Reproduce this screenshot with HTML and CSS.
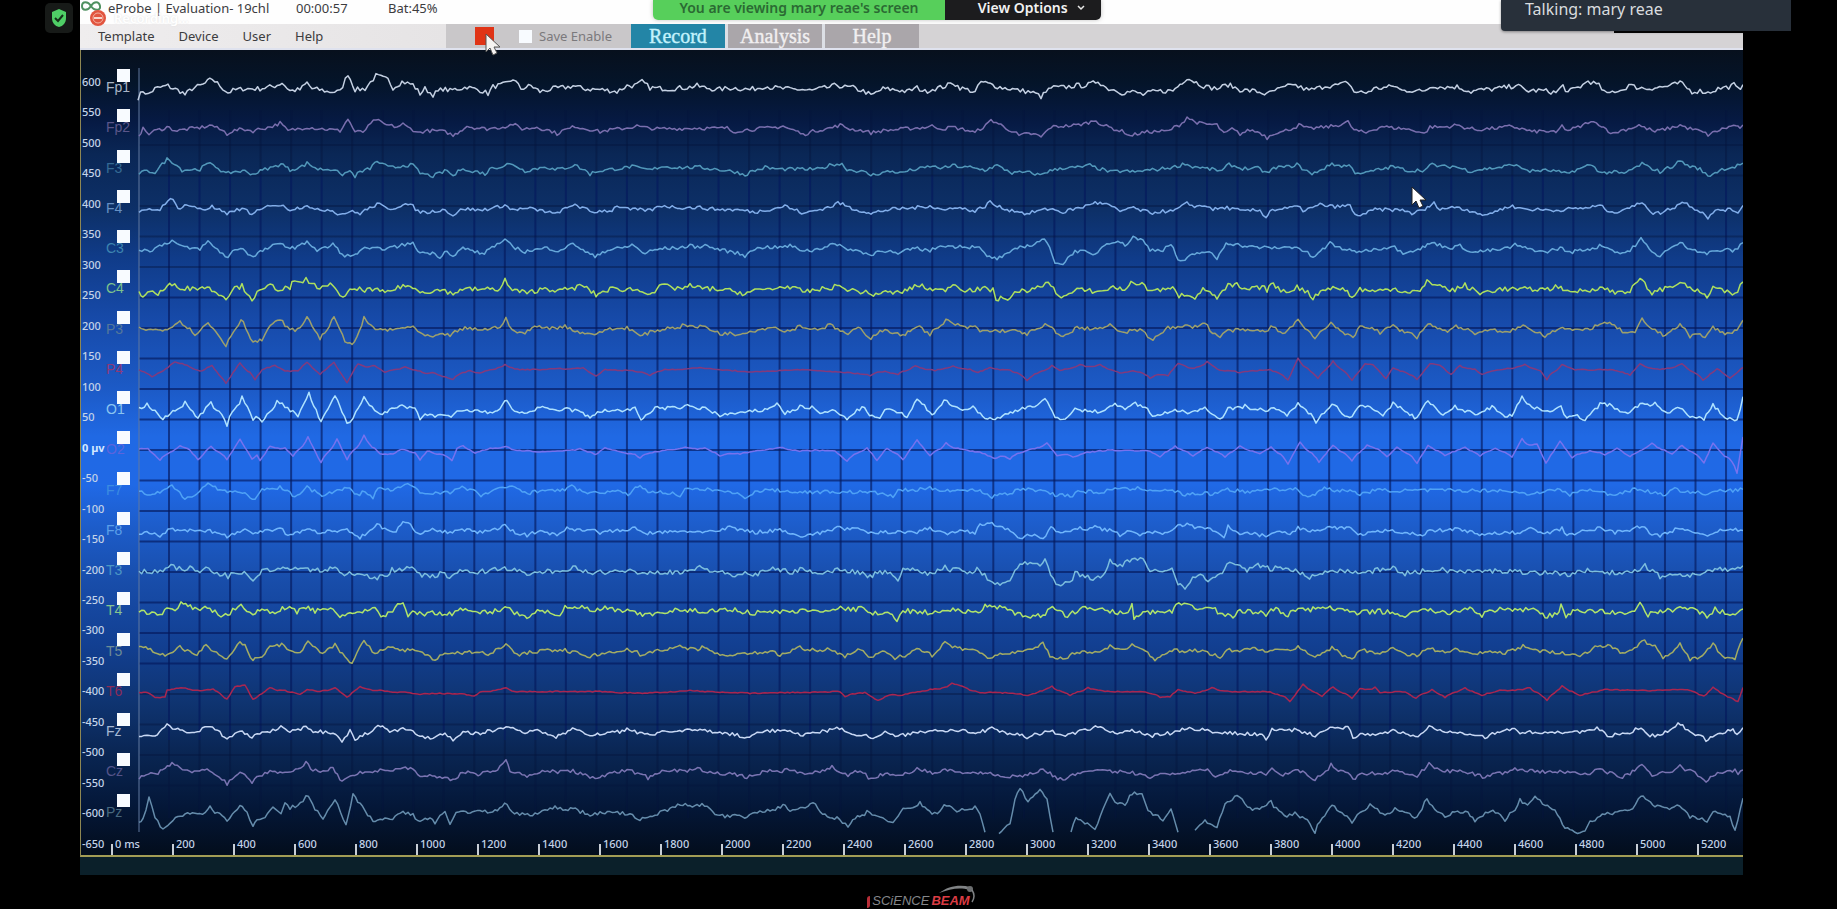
FILE: index.html
```html
<!DOCTYPE html>
<html lang="en">
<head>
<meta charset="utf-8">
<title>eProbe | Evaluation- 19chl</title>
<link rel="stylesheet" href="styles.css">
</head>
<body>
<main class="app">
  <header class="titlebar">
    <svg class="app-icon" viewBox="0 0 20 12" aria-hidden="true"><path d="M10 5C7 0 1 0 1 5s6 5 9 0 8-5 9 0-6 5-9 0z" fill="none" stroke="#4f9160" stroke-width="2"/></svg>
    <span class="app-title">eProbe | Evaluation- 19chl</span>
    <span class="clock">00:00:57</span>
    <span class="battery">Bat:45%</span>
  </header>
  <div class="menubar">
    <nav class="menu">
      <button type="button">Template</button>
      <button type="button">Device</button>
      <button type="button">User</button>
      <button type="button">Help</button>
    </nav>
    <div class="tools">
      <button type="button" class="stop" aria-label="Stop recording"></button>
      <label class="save"><input type="checkbox" class="box">Save Enable</label>
    </div>
    <div class="tabs">
      <button type="button" class="tab active">Record</button>
      <button type="button" class="tab">Analysis</button>
      <button type="button" class="tab">Help</button>
    </div>
  </div>
  <section class="plot" id="plot">
    <svg class="chart" id="chart" aria-label="EEG traces"></svg>
    <div class="channels" id="channels"></div>
  </section>
  <div class="status"></div>
</main>
<footer class="footer">
  <div class="logo">
    <span class="logo-bar"></span><span class="logo-a">SCiENCE</span><span class="logo-b">BEAM</span>
    <svg class="swoosh" viewBox="0 0 38 20" aria-hidden="true"><path d="M1 8C10 1 22-1 32 2l-1 3C22 2 12 4 1 8z" fill="#808385"/><circle cx="32" cy="4" r="3" fill="#6c6e70"/><path d="M34 5q4 6 0 12" fill="none" stroke="#808385" stroke-width="1.5"/></svg>
  </div>
</footer>

<div class="shield"><svg viewBox="0 0 18 20" aria-hidden="true"><path d="M9 1l7 3v6c0 5-3 8-7 9-4-1-7-4-7-9V4z" fill="#4fce66"/><path d="M5 10l3 3 5-6" fill="none" stroke="#15301a" stroke-width="2"/></svg></div>
<div class="recording"><svg viewBox="0 0 18 18" aria-hidden="true"><circle cx="9" cy="9" r="8" fill="#e2553f"/><circle cx="9" cy="9" r="5" fill="none" stroke="#f3b3a4" stroke-width="1"/><path d="M5 9h8" stroke="#f8d5cb" stroke-width="2"/></svg><span>Recording...</span></div>
<div class="sharebar">
  <span class="viewing">You are viewing mary reae's screen</span>
  <button type="button" class="options">View Options <svg viewBox="0 0 10 6" aria-hidden="true"><path d="M2 1l3 3 3-3" fill="none" stroke="#e8e8e8" stroke-width="1.5"/></svg></button>
</div>
<div class="speaker-shade"></div>
<div class="speaker">Talking: mary reae</div>
<svg class="cursor cursor-stop" viewBox="0 0 16 24" aria-hidden="true"><path d="M1 1v18l4-4 3 7 4-2-3-6h6z" fill="#f6f4f2" stroke="#555"/></svg>
<svg class="cursor cursor-plot" viewBox="0 0 16 24" aria-hidden="true"><path d="M1 1v18l4-4 3 7 4-2-3-6h6z" fill="#fff" stroke="#222"/></svg>
<script src="chart.js"></script>
</body>
</html>
```
FILE: styles.css
```css
* { box-sizing: border-box; }
body {
  margin: 0;
  min-height: 100vh;
  display: flex;
  flex-direction: column;
  background: #000;
  color: #3c3c3e;
  font: 13px/20px "Noto Sans", "Open Sans", sans-serif;
  overflow: hidden;
}
button { border: 0; padding: 0; font: inherit; color: inherit; background: none; white-space: nowrap; }
.app { flex: 1; display: flex; flex-direction: column; margin: 0 94px 0 80px; }
.titlebar { height: 24px; display: flex; align-items: flex-start; background: #fefefe; line-height: 16px; white-space: nowrap; }
.app-icon { width: 20px; height: 12px; margin: 1px 7px 0 1px; }
.app-title { width: 188px; }
.clock { width: 92px; }
.menubar { height: 26px; display: flex; align-items: stretch; background: linear-gradient(90deg, #efedee, #e6e4e5 366px, #d5d3d5 366px); border-bottom: 2px solid #dfe2ee; }
.menu { width: 366px; padding-left: 18px; display: flex; align-items: center; gap: 24px; }
.tools { width: 185px; padding-left: 29px; display: flex; align-items: center; gap: 25px; background: #c9c7c9; color: #7b797c; }
.stop { width: 19px; height: 18px; background: #e03416; }
.save { display: flex; align-items: center; gap: 7px; white-space: nowrap; }
.box { appearance: none; width: 13px; height: 13px; margin: 0; background: #f8fbff; flex: none; }
.tabs { display: flex; gap: 3px; background: #dcdfe5; }
.tab { width: 94px; background: #aaa6aa; color: #f1eff0; font: 20px/22px "Liberation Serif", serif; -webkit-text-stroke: 0.4px; }
.tab.active { background: #2385a6; color: #c4f2fc; }
.plot {
  flex: 1;
  min-height: 500px;
  position: relative;
  border-left: 1px solid #8e8752;
  border-bottom: 2px solid #a39d55;
  background: linear-gradient(#07101d 0%, #041429 4%, #061a44 9%, #0a2756 13%, #0d3068 20%, #103c8a 26%, #174bab 34%, #1c5ac6 42%, #2069e4 48%, #2069e6 54%, #1d5dcb 59%, #184daa 66%, #123f91 74%, #0f3471 81%, #092450 88%, #041738 94%, #030d1c 100%);
}
.chart { display: block; position: absolute; inset: 0; width: 100%; height: 100%; overflow: hidden; }
.chart text { font: 500 11px "Noto Sans", sans-serif; fill: #c3d3e8; }
.chart .zero { font-weight: 700; fill: #d4e8ff; }
.grid { stroke: #04185c; stroke-width: 2; stroke-opacity: .65; }
.grid-faint { stroke: #04143c; stroke-opacity: .4; }
.axis { stroke: #61789f; stroke-width: 1; }
.tick { stroke: #c8ced6; stroke-width: 2; }
.trace { fill: none; stroke-width: 1.5; stroke-linejoin: round; }
.channels { position: absolute; top: 5px; bottom: 35px; left: 25px; width: 22px; display: grid; grid-template-rows: repeat(19, 1fr); }
.channel { display: flex; flex-direction: column; justify-content: center; height: 26px; margin-top: 13px; font: 14px/11px "Liberation Sans", sans-serif; }
.channel .box { align-self: flex-end; }
.channel span { position: relative; }
.status { height: 18px; background: #0b202a; }
.footer { height: 34px; display: flex; justify-content: center; padding-top: 18px; }
.logo { position: relative; display: flex; gap: 2px; font: italic 700 13px/16px "Liberation Sans", sans-serif; height: 16px; }
.logo-bar { width: 3px; height: 12px; margin-top: 3px; background: #b82e38; border-radius: 3px 0; }
.logo-a { color: #85878a; font-weight: 400; }
.logo-b { color: #dc3c44; }
.swoosh { position: absolute; right: -6px; top: -8px; width: 38px; height: 20px; }
.shield { position: absolute; left: 45px; top: 3px; width: 28px; height: 30px; border-radius: 5px; background: #171a18; display: grid; place-items: center; }
.shield svg { width: 18px; height: 20px; }
.recording { position: absolute; left: 89px; top: 9px; display: flex; align-items: center; gap: 7px; color: #fff; text-shadow: 0 0 2px #ddd; font-weight: 600; line-height: 18px; }
.recording svg { width: 18px; height: 18px; }
.sharebar { position: absolute; left: 653px; top: 0; height: 20px; display: flex; border-radius: 0 0 5px 5px; overflow: hidden; font-size: 14px; font-weight: 600; line-height: 16px; box-shadow: 0 0 4px #8888; }
.viewing { width: 292px; text-align: center; background: #57cf5b; color: #2b6a33; }
.options { width: 156px; padding: 0 0 4px 18px; background: #1c1c1e; color: #f2f2f2; }
.options svg { width: 10px; height: 6px; margin: 0 0 2px 5px; }
.speaker { position: absolute; right: 46px; top: 0; width: 290px; height: 31px; padding-left: 24px; background: #28303a; color: #d9dcdf; font-size: 16px; line-height: 18px; border-radius: 0 0 0 4px; box-shadow: 0 1px 3px #0006; }
.speaker-shade { position: absolute; right: 94px; top: 24px; width: 129px; height: 9px; background: #050505; }
.cursor { position: absolute; width: 16px; height: 24px; }
.cursor-stop { left: 485px; top: 33px; }
.cursor-plot { left: 1411px; top: 186px; }
```
FILE: chart.js
```js
// Each channel: name, trace colour, label colour, then "sample,amplitude" pairs; "|" breaks the line.
const channels = [
["Fp1","#c4d0e2","#a8b4c6","138,-9 143,-2 148,-6 155,0 168,3 185,-6 192,0 203,4 212,10 220,3 228,-4 243,0 260,0 282,6 290,-2 300,-1 307,6 312,0 327,-3 340,-3 348,15 355,-1 365,0 376,13 388,9 393,1 402,7 413,4 420,-5 425,0 433,-6 443,0 450,-2 467,2 488,-5 493,2 513,10 521,0 531,3 540,-3 553,0 573,3 583,0 617,-3 627,3 642,7 650,1 670,0 697,3 717,-1 733,1 750,-1 765,3 783,0 812,-2 837,4 853,1 871,-7 883,0 907,-3 917,1 925,-3 953,6 960,1 975,-4 981,7 995,3 1015,-1 1041,-8 1051,1 1074,3 1098,8 1106,1 1122,-4 1143,-6 1173,-2 1187,11 1201,4 1217,0 1228,4 1240,-1 1267,-6 1293,5 1309,-2 1325,3 1348,7 1354,-3 1366,-4 1374,0 1394,3 1402,-2 1422,-3 1433,3 1457,2 1471,-3 1497,0 1516,4 1526,-2 1556,-4 1563,3 1568,-4 1588,8 1599,3 1607,-6 1623,-1 1629,4 1647,0 1680,6 1692,-3 1708,-4 1718,0 1734,4 1738,-1 1743,4"],
["Fp2","#7a6fae","#5a568a","139,-6 143,0 149,-5 167,2 177,-2 212,4 227,-5 242,0 253,-2 280,6 288,-2 307,2 340,-2 348,10 355,-3 363,-3 376,10 397,2 403,5 418,-4 437,-2 453,-7 467,3 487,0 513,5 522,0 537,2 557,-5 575,3 600,-3 637,3 657,0 697,1 727,1 733,-3 757,0 783,3 803,-6 840,4 850,0 871,-4 903,0 932,3 943,0 953,2 975,-4 991,9 1001,4 1019,-7 1041,-8 1051,2 1096,9 1114,0 1130,-7 1169,-2 1187,12 1217,4 1224,-5 1232,0 1240,-5 1250,-1 1267,-9 1283,-3 1299,4 1309,0 1348,7 1354,-1 1366,-4 1382,3 1406,0 1424,-5 1430,2 1457,4 1477,-1 1512,3 1532,-3 1556,-4 1562,3 1568,-2 1588,7 1599,5 1613,-5 1639,4 1655,-3 1680,4 1708,-6 1722,0 1736,4 1740,-1 1743,4"],
["F3","#5298ba","#356a94","139,-4 155,-3 167,10 175,6 182,-1 200,0 207,5 213,5 226,-5 245,-2 253,-5 265,0 281,6 290,-1 307,6 318,0 335,0 340,-6 350,-2 355,-7 370,1 377,8 388,2 403,4 413,4 420,-4 433,-7 447,-1 453,-7 463,2 470,-3 485,-5 492,2 507,5 515,4 525,-2 545,3 555,-1 575,5 590,-5 605,-1 632,3 650,-1 662,3 700,2 717,0 745,-6 765,2 780,0 820,0 832,5 842,5 847,0 871,-6 885,-3 900,-4 930,3 943,1 955,4 970,2 985,-1 997,4 1012,-4 1040,-6 1060,1 1090,4 1110,-3 1135,-3 1160,0 1185,6 1200,2 1222,-2 1229,5 1240,1 1258,1 1267,-4 1276,2 1297,5 1312,-6 1332,6 1349,4 1355,-3 1366,-4 1393,3 1410,-2 1425,-1 1432,5 1455,3 1470,-2 1514,5 1530,-2 1556,-2 1567,-5 1590,5 1602,-4 1624,-5 1642,6 1660,-3 1680,9 1700,0 1708,-7 1722,0 1740,5 1743,6"],
["F4","#82aeea","#6690c4","139,-3 152,0 160,0 168,10 173,9 178,1 187,5 205,0 212,3 227,-6 232,-1 247,0 252,-6 270,5 281,4 290,0 307,5 315,-1 330,0 340,-5 350,-2 360,-4 377,6 388,0 403,6 413,3 418,-2 430,-3 445,0 453,-6 463,1 480,-1 505,5 510,0 530,1 555,-5 575,6 592,-3 612,-1 617,4 628,0 650,-1 662,4 700,2 720,0 745,-1 755,-3 785,4 804,-5 820,0 838,7 852,1 871,-5 890,0 930,4 945,-1 955,3 975,-2 990,8 1007,0 1027,-5 1050,1 1063,-3 1093,7 1107,5 1120,-2 1131,2 1150,-4 1173,-2 1187,6 1207,4 1213,0 1227,2 1243,-2 1260,-1 1266,-8 1270,-1 1297,3 1303,-1 1320,5 1350,4 1355,-6 1366,-4 1375,0 1405,-1 1412,-4 1425,0 1434,6 1440,1 1457,3 1485,-7 1510,4 1530,0 1556,-1 1600,4 1612,-4 1622,0 1642,8 1653,-4 1663,-3 1682,8 1692,3 1708,-8 1718,0 1735,-1 1738,-3 1743,4"],
["C3","#66a8da","#3c84b0","139,0 150,-1 162,5 172,9 182,3 200,1 208,8 220,-2 228,-8 235,1 243,1 253,-8 270,3 283,6 290,1 307,9 317,-1 333,6 342,-5 353,-7 362,1 380,1 402,5 413,6 420,-3 440,-7 447,0 453,-7 463,2 482,-5 492,3 505,9 513,3 525,-2 547,2 558,-1 573,7 583,-1 595,-7 610,0 632,5 645,-4 660,1 690,4 705,5 720,0 745,-7 750,0 765,3 790,4 800,0 812,-1 830,6 842,3 848,1 871,-6 880,0 898,-5 915,2 930,-1 943,5 960,4 977,4 987,-7 997,-9 1007,-5 1020,3 1042,11 1047,7 1055,-12 1063,-14 1075,-1 1093,-6 1107,7 1118,9 1125,4 1133,13 1143,9 1150,0 1163,0 1171,6 1178,-10 1185,-12 1202,-2 1217,-9 1226,7 1238,5 1247,3 1297,3 1313,-9 1330,7 1352,-2 1366,-1 1392,4 1403,-3 1418,0 1432,7 1445,3 1460,4 1473,-3 1500,0 1515,5 1545,-3 1560,2 1570,-3 1585,0 1602,5 1620,-4 1630,-1 1641,11 1652,-3 1660,-6 1680,8 1695,0 1707,-4 1725,0 1735,-1 1743,7"],
["C4","#aee05e","#7cc28c","139,-2 143,-6 150,-1 158,-4 172,6 180,3 195,2 207,3 226,-9 232,1 242,4 252,-9 270,5 278,1 290,2 292,7 300,6 306,11 312,5 325,2 333,6 337,0 343,-9 352,1 375,0 385,-3 403,5 415,1 425,-2 445,0 453,-5 460,1 500,1 505,10 510,1 527,-4 545,2 560,-1 582,5 596,-5 610,1 630,1 650,-3 657,-1 662,6 670,2 690,4 715,1 745,-4 760,0 785,4 805,-2 837,4 850,0 871,-5 900,-3 917,5 930,1 943,-1 953,6 965,0 985,1 993,0 996,-9 1010,-8 1022,2 1027,-4 1040,5 1051,6 1056,-3 1064,-7 1077,0 1100,-2 1113,3 1127,0 1131,9 1142,5 1150,0 1168,0 1175,2 1179,-6 1195,-7 1203,0 1210,-1 1217,-9 1228,4 1237,5 1242,0 1262,3 1267,0 1271,7 1278,1 1289,-2 1297,4 1313,-8 1328,3 1345,1 1352,-8 1360,1 1375,-2 1393,2 1405,-2 1420,-2 1427,8 1440,5 1450,-1 1465,5 1480,-4 1500,1 1550,1 1561,5 1565,-3 1590,0 1600,3 1615,-3 1630,-1 1640,11 1652,-3 1660,0 1680,9 1695,0 1707,-7 1713,3 1722,-1 1735,-5 1743,8"],
["P3","#9da06c","#55789a","139,2 153,0 165,1 180,11 195,-4 208,7 218,-4 226,-16 241,12 253,-12 262,-10 268,2 280,11 290,0 300,1 307,14 320,-9 334,12 345,-10 352,-14 357,-8 364,12 373,2 390,0 405,3 413,4 420,-4 433,-7 445,-4 450,-5 465,2 490,1 500,4 506,12 512,-1 525,-3 537,5 547,2 565,5 580,-3 597,-5 605,1 627,3 640,-6 650,-2 670,3 685,6 705,4 720,-4 735,-5 765,2 778,3 785,-2 800,5 815,1 830,6 848,-5 858,3 871,-8 880,0 895,-3 903,-6 917,5 930,-4 946,10 960,4 975,4 980,-1 1020,-1 1027,-4 1045,5 1052,3 1056,-4 1068,-5 1077,3 1095,2 1110,5 1125,-4 1132,1 1140,0 1153,-10 1168,3 1185,4 1205,8 1210,0 1220,-7 1228,0 1265,-1 1271,3 1285,-3 1298,11 1315,-8 1331,8 1345,-4 1353,-8 1360,4 1372,3 1380,-3 1393,5 1402,-1 1417,-7 1428,7 1440,1 1450,-1 1456,5 1475,-3 1495,0 1505,-3 1523,5 1545,-6 1560,3 1580,-1 1600,7 1612,6 1625,-3 1635,-3 1642,11 1663,-6 1680,6 1690,-6 1705,-7 1713,3 1725,-4 1737,0 1743,10"],
["P4","#843a7c","#8e3a78","139,1 152,-6 163,-1 175,9 187,5 200,-1 212,5 226,-13 240,8 255,-9 262,1 275,5 285,-1 298,0 307,8 320,-4 334,8 347,-12 358,7 375,5 385,-2 405,4 425,-3 440,-5 453,-9 470,0 480,-3 505,6 515,1 560,2 583,3 596,-6 605,1 630,0 650,-5 665,1 700,3 750,-2 800,1 870,-5 885,-1 898,-4 915,5 935,0 953,5 970,1 978,-2 990,3 1010,0 1027,-10 1052,5 1060,0 1080,6 1100,6 1120,-3 1133,0 1150,-8 1168,-5 1178,7 1192,2 1207,9 1220,0 1240,-2 1270,1 1288,-10 1298,12 1318,-8 1333,10 1352,-10 1365,7 1373,6 1386,-8 1393,3 1417,-9 1430,7 1440,5 1451,-4 1460,5 1475,1 1482,-4 1500,1 1525,6 1540,0 1547,-9 1562,6 1575,1 1610,1 1630,-5 1640,7 1660,1 1682,7 1703,-10 1717,2 1730,-8 1743,3"],
["O1","#aee2ff","#8ac4f0","139,2 147,6 163,-9 185,8 198,-7 211,8 227,-14 242,15 253,-10 256,-5 262,-12 277,10 285,4 298,-5 309,17 321,-12 335,15 347,-12 353,-8 364,14 380,-3 392,1 402,5 415,1 420,-8 435,-5 451,-8 457,-1 475,0 490,-3 500,3 507,11 512,0 527,-3 540,4 550,0 567,2 583,-2 590,-8 605,1 620,0 635,2 641,-9 655,3 690,5 705,3 720,-6 740,-3 765,1 777,7 785,-3 800,4 812,3 820,-3 835,0 847,-9 862,4 872,-6 880,-8 887,3 907,-7 917,11 922,7 932,-4 944,10 955,5 965,0 973,4 985,-7 995,-9 1008,-3 1020,2 1045,12 1055,-7 1063,-9 1075,2 1080,0 1100,-1 1115,8 1125,0 1133,8 1145,3 1155,-6 1175,0 1190,-2 1205,3 1220,-9 1228,2 1245,5 1268,0 1271,3 1287,-5 1298,8 1316,-11 1332,8 1345,-5 1352,-7 1358,5 1370,5 1383,-6 1393,7 1405,0 1417,-8 1428,11 1441,-4 1445,-4 1455,4 1475,-4 1492,4 1505,-5 1512,-4 1522,14 1537,2 1550,0 1561,4 1567,-8 1585,-9 1600,7 1612,5 1628,-4 1640,7 1655,9 1662,-1 1670,-1 1680,4 1690,-7 1704,-8 1713,6 1725,-7 1737,-10 1743,14"],
["O2","#7772ee","#5c64dc","139,2 148,2 160,-9 180,5 190,1 198,-9 211,5 227,-9 240,12 252,-8 257,-4 260,-10 270,5 285,3 293,-5 308,14 321,-12 337,12 347,-9 364,16 380,-3 393,-3 402,2 415,-2 420,-9 427,0 437,-3 452,-10 457,3 463,5 475,-2 490,3 506,5 512,1 540,-1 560,0 580,2 595,-4 605,3 625,-2 640,-7 655,-1 685,4 705,3 720,-5 740,-3 780,4 800,0 815,1 835,0 847,-10 867,3 877,-9 887,3 903,-9 917,11 930,-5 946,8 965,1 985,-3 995,-8 1010,-8 1025,0 1047,8 1057,-5 1073,-6 1085,-2 1110,1 1150,0 1160,-6 1175,5 1193,-5 1207,4 1225,-6 1240,5 1260,-3 1271,4 1288,-13 1300,9 1319,-11 1333,6 1352,-10 1367,6 1378,2 1387,-6 1397,4 1417,-12 1428,6 1445,-5 1465,4 1480,-5 1495,3 1512,-6 1522,12 1537,7 1546,-12 1560,10 1572,-7 1590,0 1605,-4 1617,3 1630,-6 1652,8 1672,-3 1682,6 1704,-12 1713,8 1722,-3 1737,-22 1743,14"],
["F7","#4fa2f6","#3c8ce0","139,0 150,-5 160,-1 172,5 185,-7 197,-2 208,8 220,1 235,0 255,-9 262,1 280,4 295,-6 307,5 322,-5 347,4 357,-4 365,0 373,-7 378,4 393,1 405,6 413,6 420,-2 433,-2 450,-1 462,4 478,-1 481,-5 495,2 512,6 530,-2 545,2 560,0 572,5 590,-3 610,0 628,-3 640,6 648,0 680,-4 685,2 715,2 745,-6 765,2 800,-1 870,-1 893,-6 898,1 930,3 955,1 980,1 992,-6 1010,-2 1023,3 1048,0 1055,-4 1070,-6 1078,0 1104,-2 1110,3 1140,3 1175,0 1185,-4 1215,-3 1225,3 1245,-1 1272,3 1298,2 1303,-4 1315,-4 1322,3 1350,0 1360,-3 1375,1 1450,1 1500,1 1527,-3 1560,2 1570,-4 1585,2 1605,-2 1615,-4 1635,3 1663,-4 1675,2 1708,-4 1715,0 1743,2"],
["F8","#70b6fc","#5ca0e8","139,-4 147,0 160,-5 168,2 180,2 210,1 227,-6 245,2 253,-3 265,2 280,4 288,-4 307,2 320,-1 347,2 360,-6 370,0 377,7 390,0 396,0 403,10 413,4 418,-2 430,2 450,-1 467,2 480,-1 505,6 513,0 527,-4 540,1 557,-5 567,4 590,2 600,-1 635,3 645,-2 690,0 720,0 730,5 745,1 755,-1 780,2 803,-6 820,-2 837,5 855,3 871,-2 900,0 917,-1 930,4 945,-3 960,1 975,-1 980,7 992,9 1013,0 1020,-7 1037,-5 1043,-8 1051,3 1063,-1 1080,3 1095,6 1112,1 1120,-4 1132,1 1140,-3 1170,-1 1178,5 1187,8 1205,4 1218,-2 1224,-7 1228,5 1240,-3 1262,-4 1266,-7 1272,0 1290,-3 1298,4 1315,0 1330,5 1349,4 1353,0 1363,-4 1390,2 1420,-5 1430,1 1460,3 1482,-4 1520,-1 1531,3 1545,-3 1562,3 1567,-4 1600,4 1615,-1 1642,6 1652,-4 1660,-4 1675,2 1690,1 1705,-4 1715,0 1733,2 1743,1"],
["T3","#7cbede","#4c96c4","139,0 160,0 171,5 182,2 190,4 200,-1 206,5 217,-1 220,-5 225,-1 228,-7 231,1 247,-3 253,-8 262,1 283,4 290,1 303,5 320,1 335,5 342,-4 357,-1 372,-6 385,-5 392,2 412,4 422,-3 430,-6 440,-2 452,-5 460,0 475,-1 500,4 512,3 527,-4 545,1 560,-2 573,5 583,0 610,-2 620,2 650,-1 680,0 702,5 720,-1 735,-5 745,0 753,-5 765,1 778,3 790,-1 800,2 825,-1 840,3 855,0 870,-5 885,0 898,-7 903,2 915,2 930,-2 945,5 950,2 956,6 962,0 975,0 977,4 990,-9 1000,-12 1010,-7 1020,9 1030,9 1045,12 1048,4 1056,-13 1070,-12 1075,-1 1085,-4 1093,-8 1103,-3 1110,11 1125,8 1132,14 1143,11 1150,0 1165,1 1172,5 1178,-12 1185,-15 1203,-4 1208,-9 1220,-3 1227,8 1240,5 1247,2 1258,6 1270,3 1283,4 1298,1 1307,-7 1320,-2 1330,3 1345,1 1358,-1 1375,1 1393,6 1400,-3 1420,0 1440,3 1460,0 1500,1 1540,-1 1570,-3 1595,3 1622,-4 1645,7 1660,-5 1690,-3 1705,-2 1715,4 1735,1 1743,6"],
["T4","#b0e46a","#86c490","139,2 160,-4 167,6 175,3 181,8 195,3 205,4 215,1 221,-5 230,-1 241,8 247,2 253,-3 262,3 270,-1 280,2 292,6 297,0 306,5 315,1 333,3 340,-4 360,-1 375,3 381,-6 395,4 403,9 408,-3 415,2 422,-4 430,0 452,-3 458,3 480,-1 500,2 505,7 512,0 527,-5 540,2 560,-3 565,4 582,6 590,1 605,4 625,1 640,-3 655,-3 670,2 700,1 735,3 750,-1 800,1 838,4 866,4 868,-2 890,-3 897,-7 903,2 920,0 935,-1 953,3 978,-2 985,6 992,7 1005,3 1015,-2 1028,-5 1043,-5 1050,3 1060,3 1065,-5 1080,1 1085,7 1090,3 1105,4 1115,-1 1128,-1 1132,6 1134,-5 1143,-1 1172,0 1176,7 1187,6 1200,4 1213,4 1220,-2 1233,-4 1240,1 1266,-2 1271,5 1288,-3 1298,5 1318,3 1330,5 1345,2 1352,-2 1380,1 1405,-4 1428,3 1445,-2 1470,5 1482,-3 1500,3 1515,1 1531,5 1545,-4 1557,-3 1561,7 1566,-4 1575,1 1600,1 1620,-2 1637,3 1640,10 1648,-3 1680,5 1695,4 1707,-5 1715,3 1730,-3 1743,3"],
["T5","#a3ac64","#6e8c96","139,4 148,4 165,-4 180,6 197,-2 206,8 227,-8 240,11 245,6 253,-10 257,-4 262,-6 270,6 284,8 290,0 300,-2 308,12 320,-1 335,8 345,-6 352,-10 364,11 375,-2 388,6 395,3 415,3 425,-3 435,-7 450,-2 477,1 488,-3 506,10 517,-3 545,3 565,2 590,-5 607,-1 627,3 637,0 640,-5 655,2 680,7 698,3 702,6 720,-4 750,-2 770,1 780,-3 800,5 815,2 830,4 845,-4 858,3 871,-5 885,1 895,-6 905,-3 917,5 932,-4 945,9 955,5 975,4 990,-7 1010,-1 1025,1 1043,9 1050,-4 1063,-7 1077,0 1100,1 1110,6 1125,2 1132,9 1143,3 1155,-7 1172,2 1200,2 1220,-6 1227,2 1255,4 1270,1 1298,5 1315,-5 1332,5 1345,-5 1352,-6 1362,3 1380,-1 1393,4 1405,-2 1417,-4 1428,5 1440,0 1455,3 1475,-3 1490,1 1505,-1 1523,7 1540,1 1560,0 1580,-5 1595,6 1608,7 1620,0 1632,1 1642,12 1655,6 1663,-7 1680,8 1690,-8 1700,-4 1713,8 1725,-7 1735,-6 1743,14"],
["T6","#a92650","#8c2c58","139,0 148,0 155,-5 165,-5 167,2 181,5 195,2 213,4 227,-7 235,6 245,7 253,-7 262,-1 270,5 285,2 300,-2 307,3 320,1 335,5 347,-5 360,6 380,2 405,0 420,-2 437,-1 450,-1 474,-4 480,0 506,5 512,1 560,1 600,1 640,-1 690,2 750,-1 840,1 845,-4 865,0 878,-8 890,-2 900,-3 930,3 952,9 965,5 980,0 1000,0 1028,-3 1040,1 1052,6 1070,-3 1088,5 1110,1 1145,1 1160,-5 1170,-4 1178,3 1195,-1 1212,5 1230,1 1270,1 1290,-9 1303,8 1322,-4 1333,6 1352,-6 1360,4 1375,5 1380,0 1405,1 1416,-6 1432,3 1445,-5 1465,5 1482,-3 1500,2 1530,5 1547,-8 1562,7 1580,-3 1605,3 1680,3 1690,2 1704,-4 1713,5 1725,-3 1738,-9 1743,5"],
["Fz","#c8d8f4","#a6b8d4","139,-5 155,-3 167,8 178,3 187,0 205,5 210,7 220,0 227,-6 240,1 252,-4 270,1 281,6 290,1 306,7 313,2 333,0 342,-8 350,2 355,-8 370,1 378,8 392,1 403,4 413,1 420,-4 433,-5 445,0 453,-7 463,1 478,-1 490,2 506,7 520,1 540,2 556,-5 575,5 590,-4 610,0 627,3 655,-3 662,3 700,3 720,0 747,-6 765,2 785,4 803,-3 820,1 837,6 847,0 871,-5 885,0 898,-4 930,3 953,4 978,0 992,4 1010,-2 1027,-5 1050,2 1063,-4 1080,2 1098,7 1120,-1 1132,3 1150,-4 1175,0 1187,5 1205,3 1220,-1 1245,-1 1262,-3 1266,-6 1272,3 1297,3 1315,-3 1330,6 1348,5 1353,-4 1380,-1 1393,2 1418,-5 1429,6 1440,3 1460,1 1485,-5 1512,5 1520,0 1555,1 1565,0 1597,4 1610,-4 1630,0 1641,6 1650,-3 1660,-2 1678,9 1690,2 1706,-8 1715,-1 1733,3 1737,-3 1743,5"],
["Cz","#7a74b2","#54548a","139,-5 158,0 172,9 180,5 192,1 207,4 227,-11 240,2 252,-9 270,3 285,1 306,10 313,3 333,5 342,-9 350,-4 360,1 375,2 403,6 413,4 420,-4 437,-4 453,-8 463,2 478,-2 500,6 506,12 510,3 527,-4 545,2 573,2 595,-7 612,0 627,4 648,-5 662,3 700,4 720,0 747,-5 765,2 787,3 805,0 820,1 832,6 848,-2 860,3 871,-7 885,0 898,-4 917,5 930,0 945,3 978,0 1010,-4 1025,-3 1043,4 1055,-4 1063,-7 1080,0 1105,3 1130,1 1150,-4 1175,0 1205,4 1218,-4 1230,3 1266,-1 1272,5 1283,-2 1298,4 1315,-8 1331,8 1348,1 1353,-7 1362,0 1380,-1 1395,3 1417,-4 1429,10 1440,2 1460,3 1485,-5 1515,4 1560,1 1590,0 1600,4 1620,-5 1630,-1 1642,10 1652,-2 1665,0 1680,8 1695,0 1706,-9 1715,-1 1735,3 1738,-2 1743,3"],
["Pz","#658cab","#48687e","139,-8 143,-6 149,15 155,-5 163,-16 173,-7 190,0 200,-2 210,6 227,-9 240,7 247,2 253,-14 257,-6 265,-4 273,5 281,-2 285,12 290,5 303,11 306,19 315,4 323,-5 335,14 346,-13 353,18 365,2 373,-8 390,-7 403,1 413,-2 420,-8 435,-9 445,2 450,-12 456,2 480,2 495,2 507,10 512,0 530,-2 555,7 563,3 573,6 590,-2 605,1 630,-1 640,-6 650,-4 670,5 683,9 690,6 702,9 715,0 725,-3 747,-4 765,3 783,8 790,3 813,10 825,-2 837,-5 848,-13 867,1 880,-3 893,-11 903,5 920,10 932,0 940,1 944,8 957,3 975,6 980,0 985,-19|999,-19 1010,-9 1015,13 1020,25 1028,11 1040,23 1047,15 1053,-19|1071,-19 1076,-5 1085,-9 1095,-15 1103,3 1110,20 1125,9 1132,20 1142,18 1148,3 1163,-7 1171,4 1178,-19|1195,-18 1205,-7 1217,-14 1225,8 1237,18 1250,4 1262,6 1271,11 1287,-4 1295,0 1315,-19 1332,9 1352,-9 1360,0 1370,9 1380,2 1385,-3 1395,4 1417,-5 1427,15 1445,-4 1455,2 1468,0 1475,-8 1493,4 1505,-7 1520,13 1535,16 1545,8 1555,3 1565,-15 1575,-19 1585,-19 1600,-3 1620,2 1630,2 1641,18 1655,8 1667,4 1677,9 1690,-4 1707,-9 1713,2 1730,-4 1735,-17 1743,15"]
];
const FIRST = 139, LAST = 1743, GUTTER = 58;
const chart = document.getElementById("chart");
const SMOOTH = new Set(["P4", "T6", "O2"]);
const ROUGH = new Set(["Fp1", "C4", "T3", "T4"]);

let seed = 7;
const noise = () => { seed = (seed * 16807) % 2147483647; return seed / 2147483647 - .5; };

function tracePath(data, base, sx, k, grain) {
  return data.split("|").map(run => {
    const p = run.split(" ").map(s => s.split(",").map(Number));
    const out = [];
    for (let i = 0; i < p.length - 1; i++) {
      const [x0, y0] = p[i], [x1, y1] = p[i + 1];
      const n = Math.max(1, Math.round((x1 - x0) / 2.5));
      // Long gaps between peaks settle to the resting level before rising again.
      const rest = x1 - x0 > 14 ? .35 : 0;
      for (let j = 0; j < n; j++) {
        const t = j / n;
        const y = (y0 + (y1 - y0) * t) * (1 - rest * Math.sin(Math.PI * t));
        out.push([x0 + (x1 - x0) * t, y + noise() * grain]);
      }
    }
    out.push(p[p.length - 1]);
    return "M" + out.map(([x, y]) => (GUTTER + (x - FIRST) * sx).toFixed(1) + " " + (base - y * k).toFixed(1)).join("L");
  }).join("");
}

function draw() {
  seed = 7;
  const W = chart.clientWidth, H = chart.clientHeight, k = H / 805;
  const sx = (W - GUTTER) / (LAST - FIRST);
  const px = x => GUTTER + (x - FIRST) * sx;
  let s = "";
  for (let i = 0; i < 52; i++) {
    const x = px(169 + i * 30.53);
    s += `<path class="grid grid-faint" d="M${x} ${60 * k}V${125 * k}M${x} ${690 * k}V${768 * k}"/>`;
    s += `<path class="grid" d="M${x} ${125 * k}V${690 * k}"/>`;
  }
  for (let i = 0; i < 22; i++)
    s += `<path class="grid${i < 5 || i > 17 ? " grid-faint" : ""}" d="M${GUTTER} ${(95 + i * 30.5) * k}H${W}"/>`;
  s += `<path class="axis" d="M${GUTTER} ${18 * k}V${782 * k}"/>`;
  for (let v = 600, i = 0; v >= -650; v -= 50, i++)
    s += `<text x="1" y="${(36 + i * 30.47) * k}"${v ? "" : ' class="zero"'}>${v || "0 µv"}</text>`;
  for (let i = 0; i <= 26; i++) {
    const x = px(112 + i * 61);
    s += `<path class="tick" d="M${x} ${H - 11}V${H}"/><text x="${x + 3}" y="${H - 7}">${i ? i * 200 : "0 ms"}</text>`;
  }
  channels.forEach(([name, colour, , data], i) => {
    const grain = SMOOTH.has(name) ? 1 : ROUGH.has(name) ? 5 : 3.5;
    s += `<path class="trace" stroke="${colour}" d="${tracePath(data, (38.7 + i * 40.25) * k, sx, k, grain)}"/>`;
  });
  chart.innerHTML = s;
}

document.getElementById("channels").innerHTML = channels.map(([name, , colour]) =>
  `<label class="channel" style="color:${colour}"><input type="checkbox" class="box"><span>${name}</span></label>`).join("");
draw();
addEventListener("resize", draw);
```
